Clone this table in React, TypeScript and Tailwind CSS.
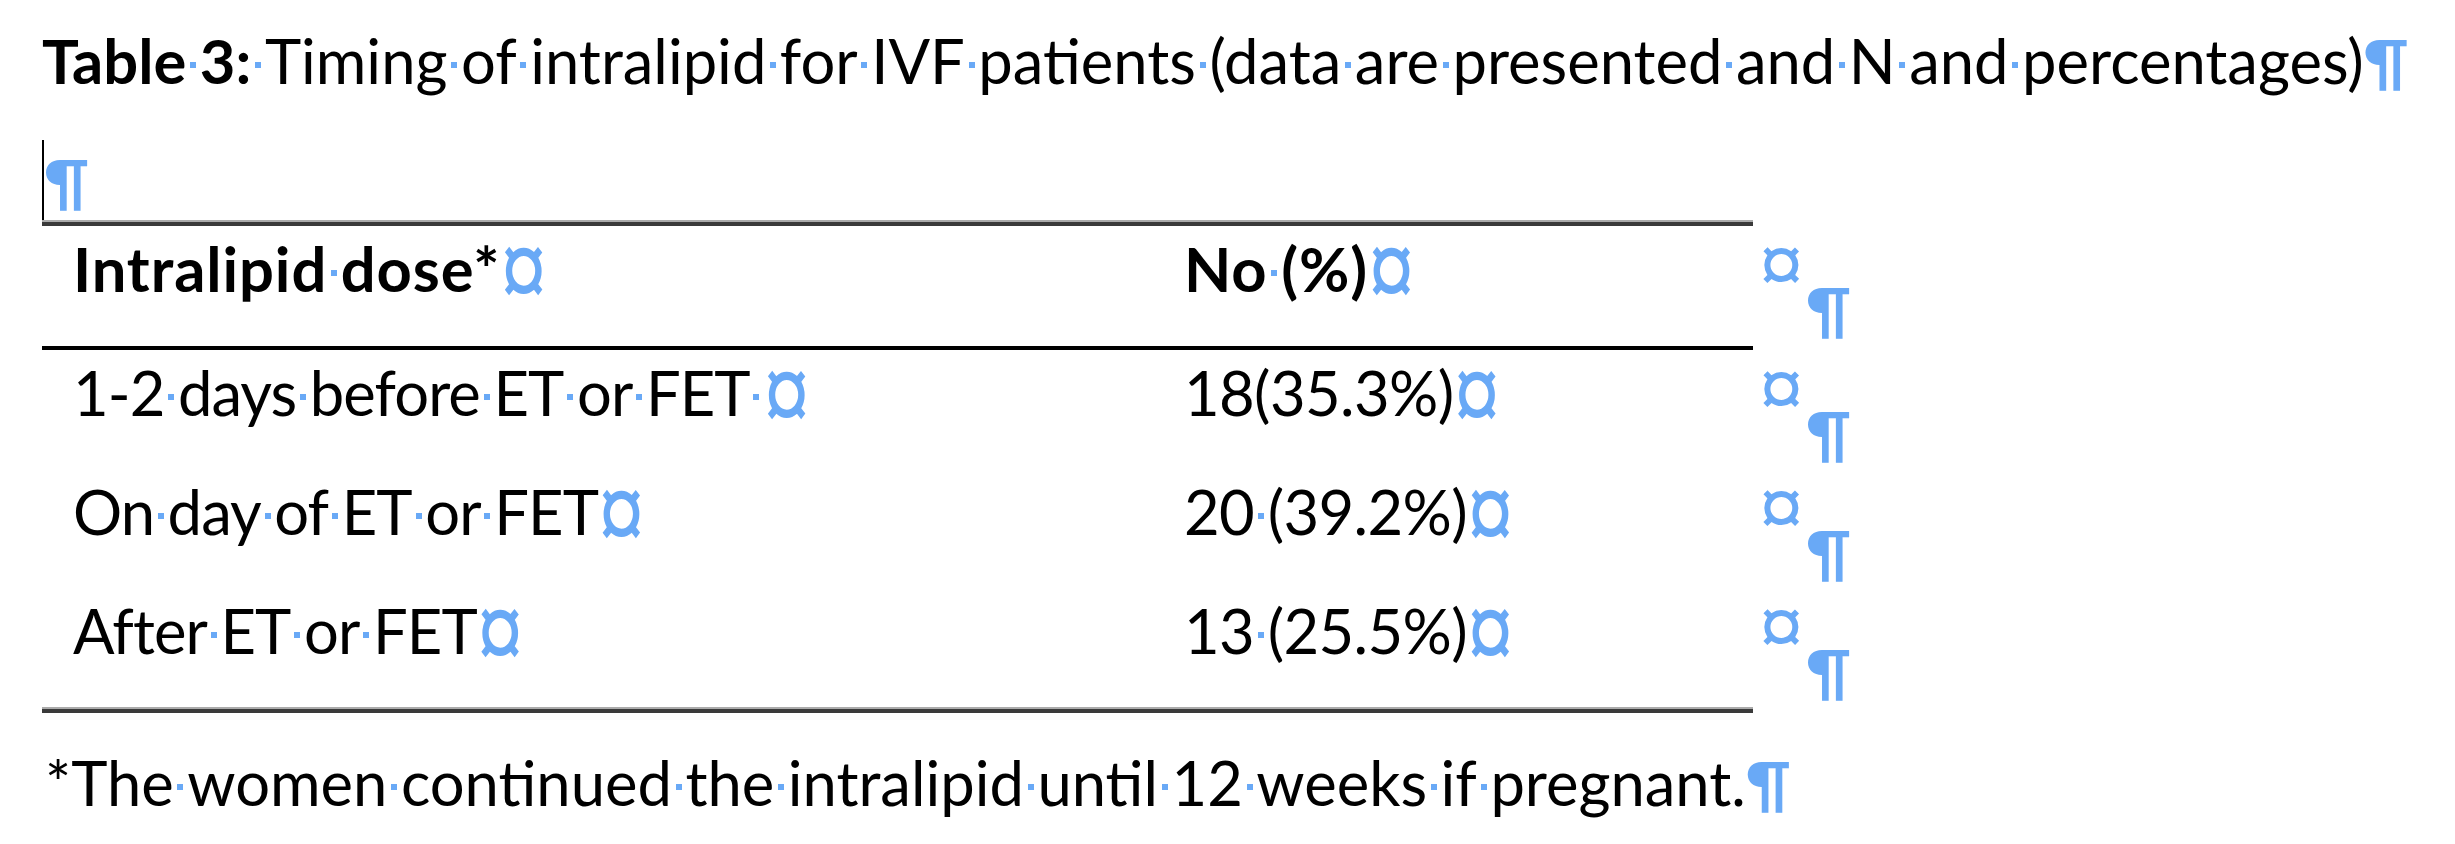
import React from "react";

function Sp() {
  return (
    <span className="inline-block w-[0.22em]">
      <span className="mx-auto mb-[16px] block h-[6px] w-[6px] bg-[#69a9f6]" />
    </span>
  );
}

function W({ t }: { t: string }) {
  const parts = t.split(" ");
  return (
    <>
      {parts.map((p, i) => (
        <React.Fragment key={i}>
          {i > 0 && <Sp />}
          {p}
        </React.Fragment>
      ))}
    </>
  );
}

const Pil = () => <span className="font-bold text-[#69a9f6]">¶</span>;
const CellMark = () => (
  <span className="relative top-[6px] inline-block scale-y-[1.3] font-['Liberation_Sans',sans-serif] text-[84px] font-normal leading-[0px] tracking-normal text-[#69a9f6]">
    ¤
  </span>
);

function RowMarks() {
  return (
    <div className="flex w-[120px] flex-col pl-[6px] text-[#69a9f6]">
      <span className="mt-[25px] h-[27px] font-['Liberation_Sans',sans-serif] text-[80px] leading-[27px]">¤</span>
      <span className="ml-[47px] font-bold leading-[60px]">¶</span>
    </div>
  );
}

function Rule() {
  return (
    <div className="w-[1711px]">
      <div className="h-[2px] bg-[#ababab]" />
      <div className="h-[4px] bg-[#3a3a3a]" />
    </div>
  );
}

const rows: [string, string][] = [
  ["1-2 days before ET or FET ", "18(35.3%)"],
  ["On day of ET or FET", "20 (39.2%)"],
  ["After ET or FET", "13 (25.5%)"],
];

export default function App() {
  return (
    <div className="min-h-screen bg-white font-['Lato',sans-serif] text-[61.5px] text-black">
      <div className="pl-[42px] pt-[24px]">
        <p className="whitespace-nowrap leading-[72px]">
          <span className="font-bold">
            Table
            <Sp />
            3:
          </span>
          <Sp />
          <W t="Timing of intralipid for IVF patients (data are presented and N and percentages)" />
          <Pil />
        </p>

        <div className="mt-[44px] flex h-[80px]">
          <div className="h-full w-[2px] bg-black" />
          <span className="mt-[4px] leading-[72px]">
            <Pil />
          </span>
        </div>

        <Rule />

        <div className="flex h-[120px]">
          <div className="flex w-[1711px]">
            <div className="w-[1111px] whitespace-nowrap pl-[31px] pt-[6px] font-bold leading-[72px] tracking-[0.015em]">
              <W t="Intralipid dose*" />
              <CellMark />
            </div>
            <div className="flex-1 whitespace-nowrap pl-[31px] pt-[6px] font-bold leading-[72px] tracking-[0.015em]">
              <W t="No (%)" />
              <CellMark />
            </div>
          </div>
          <RowMarks />
        </div>
        <div className="h-[4px] w-[1711px] bg-black" />

        {rows.map(([a, b], i) => (
          <div key={i} className="flex h-[119px]">
            <div className="flex w-[1711px]">
              <div className="w-[1111px] whitespace-nowrap pl-[31px] pt-[6px] leading-[72px] tracking-[-0.015em]">
                <W t={a} />
                <CellMark />
              </div>
              <div className="flex-1 whitespace-nowrap pl-[31px] pt-[6px] leading-[72px] tracking-[-0.01em]">
                <W t={b} />
                <CellMark />
              </div>
            </div>
            <RowMarks />
          </div>
        ))}

        <Rule />

        <p className="mt-[33px] whitespace-nowrap pl-[3px] leading-[72px]">
          <W t="*The women continued the intralipid until 12 weeks if pregnant." />
          <Pil />
        </p>
      </div>
    </div>
  );
}
